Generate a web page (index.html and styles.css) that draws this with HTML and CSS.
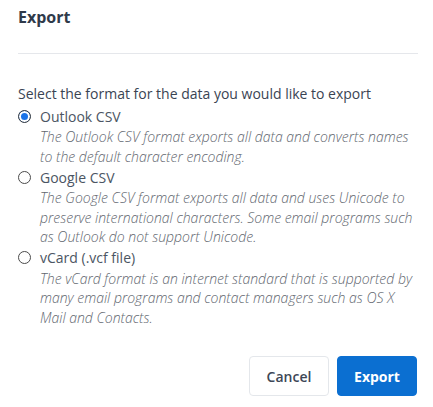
FILE: index.html
```html
<!DOCTYPE html>
<html>
<head>
<meta charset="utf-8">
<link rel="stylesheet" href="styles.css">
</head>
<body>
<div class="dialog">
  <div class="header">
    <h1 class="title">Export</h1>
  </div>
  <div class="content">
    <p class="prompt">Select the format for the data you would like to export</p>
    <div class="options">
      <div class="option">
        <label class="option-label"><input type="radio" name="fmt" class="radio" checked><span>Outlook CSV</span></label>
        <p class="desc">The Outlook CSV format exports all data and converts names to the default character encoding.</p>
      </div>
      <div class="option">
        <label class="option-label"><input type="radio" name="fmt" class="radio"><span>Google CSV</span></label>
        <p class="desc">The Google CSV format exports all data and uses Unicode to preserve international characters. Some email programs such as Outlook do not support Unicode.</p>
      </div>
      <div class="option">
        <label class="option-label"><input type="radio" name="fmt" class="radio"><span>vCard (.vcf file)</span></label>
        <p class="desc">The vCard format is an internet standard that is supported by many email programs and contact managers such as OS X Mail and Contacts.</p>
      </div>
    </div>
  </div>
  <div class="footer">
    <button class="btn btn-cancel">Cancel</button>
    <button class="btn btn-primary">Export</button>
  </div>
</div>
</body>
</html>
```
FILE: styles.css
```css
html, body {
  margin: 0;
  padding: 0;
  background: #ffffff;
}
body {
  font-family: "Open Sans", "Noto Sans", sans-serif;
  color: #3d4756;
}
.dialog {
  width: 400px;
  margin-left: 18px;
}
.header {
  padding: 5px 0 24px;
  border-bottom: 1px solid #e5e7eb;
}
.title {
  margin: 0;
  font-size: 16px;
  line-height: 24px;
  font-weight: 700;
  color: #2f3a4a;
}
.content {
  padding-top: 30px;
}
.prompt {
  margin: 0 0 2px;
  font-size: 14px;
  line-height: 19px;
  color: #3a4453;
}
.option-label {
  display: flex;
  align-items: center;
  height: 22px;
  font-size: 14px;
  color: #4b5563;
}
.radio {
  appearance: none;
  -webkit-appearance: none;
  margin: 0 9px 0 0;
  width: 13px;
  height: 13px;
  border: 1px solid #4a4a4a;
  border-radius: 50%;
  background: #fff;
  box-sizing: border-box;
}
.radio:checked {
  background: #1a73e8;
  box-shadow: inset 0 0 0 2px #ffffff;
  border-color: #3c3c3c;
}
.desc {
  margin: 0 0 0 22px;
  font-size: 14px;
  line-height: 19.5px;
  font-style: italic;
  font-weight: 300;
  color: #62676f;
}
.footer {
  display: flex;
  justify-content: flex-end;
  gap: 8px;
  margin-top: 29px;
  padding-right: 1px;
}
.btn {
  width: 80px;
  height: 40px;
  border-radius: 4px;
  font-family: "Open Sans", "Noto Sans", sans-serif;
  font-size: 14px;
  font-weight: 600;
  cursor: pointer;
}
.btn-cancel {
  background: #fff;
  border: 1px solid #e4e7eb;
  color: #3d4756;
}
.btn-primary {
  background: #0b6fd1;
  border: 1px solid #0b6fd1;
  color: #fff;
  font-weight: 700;
}
```
